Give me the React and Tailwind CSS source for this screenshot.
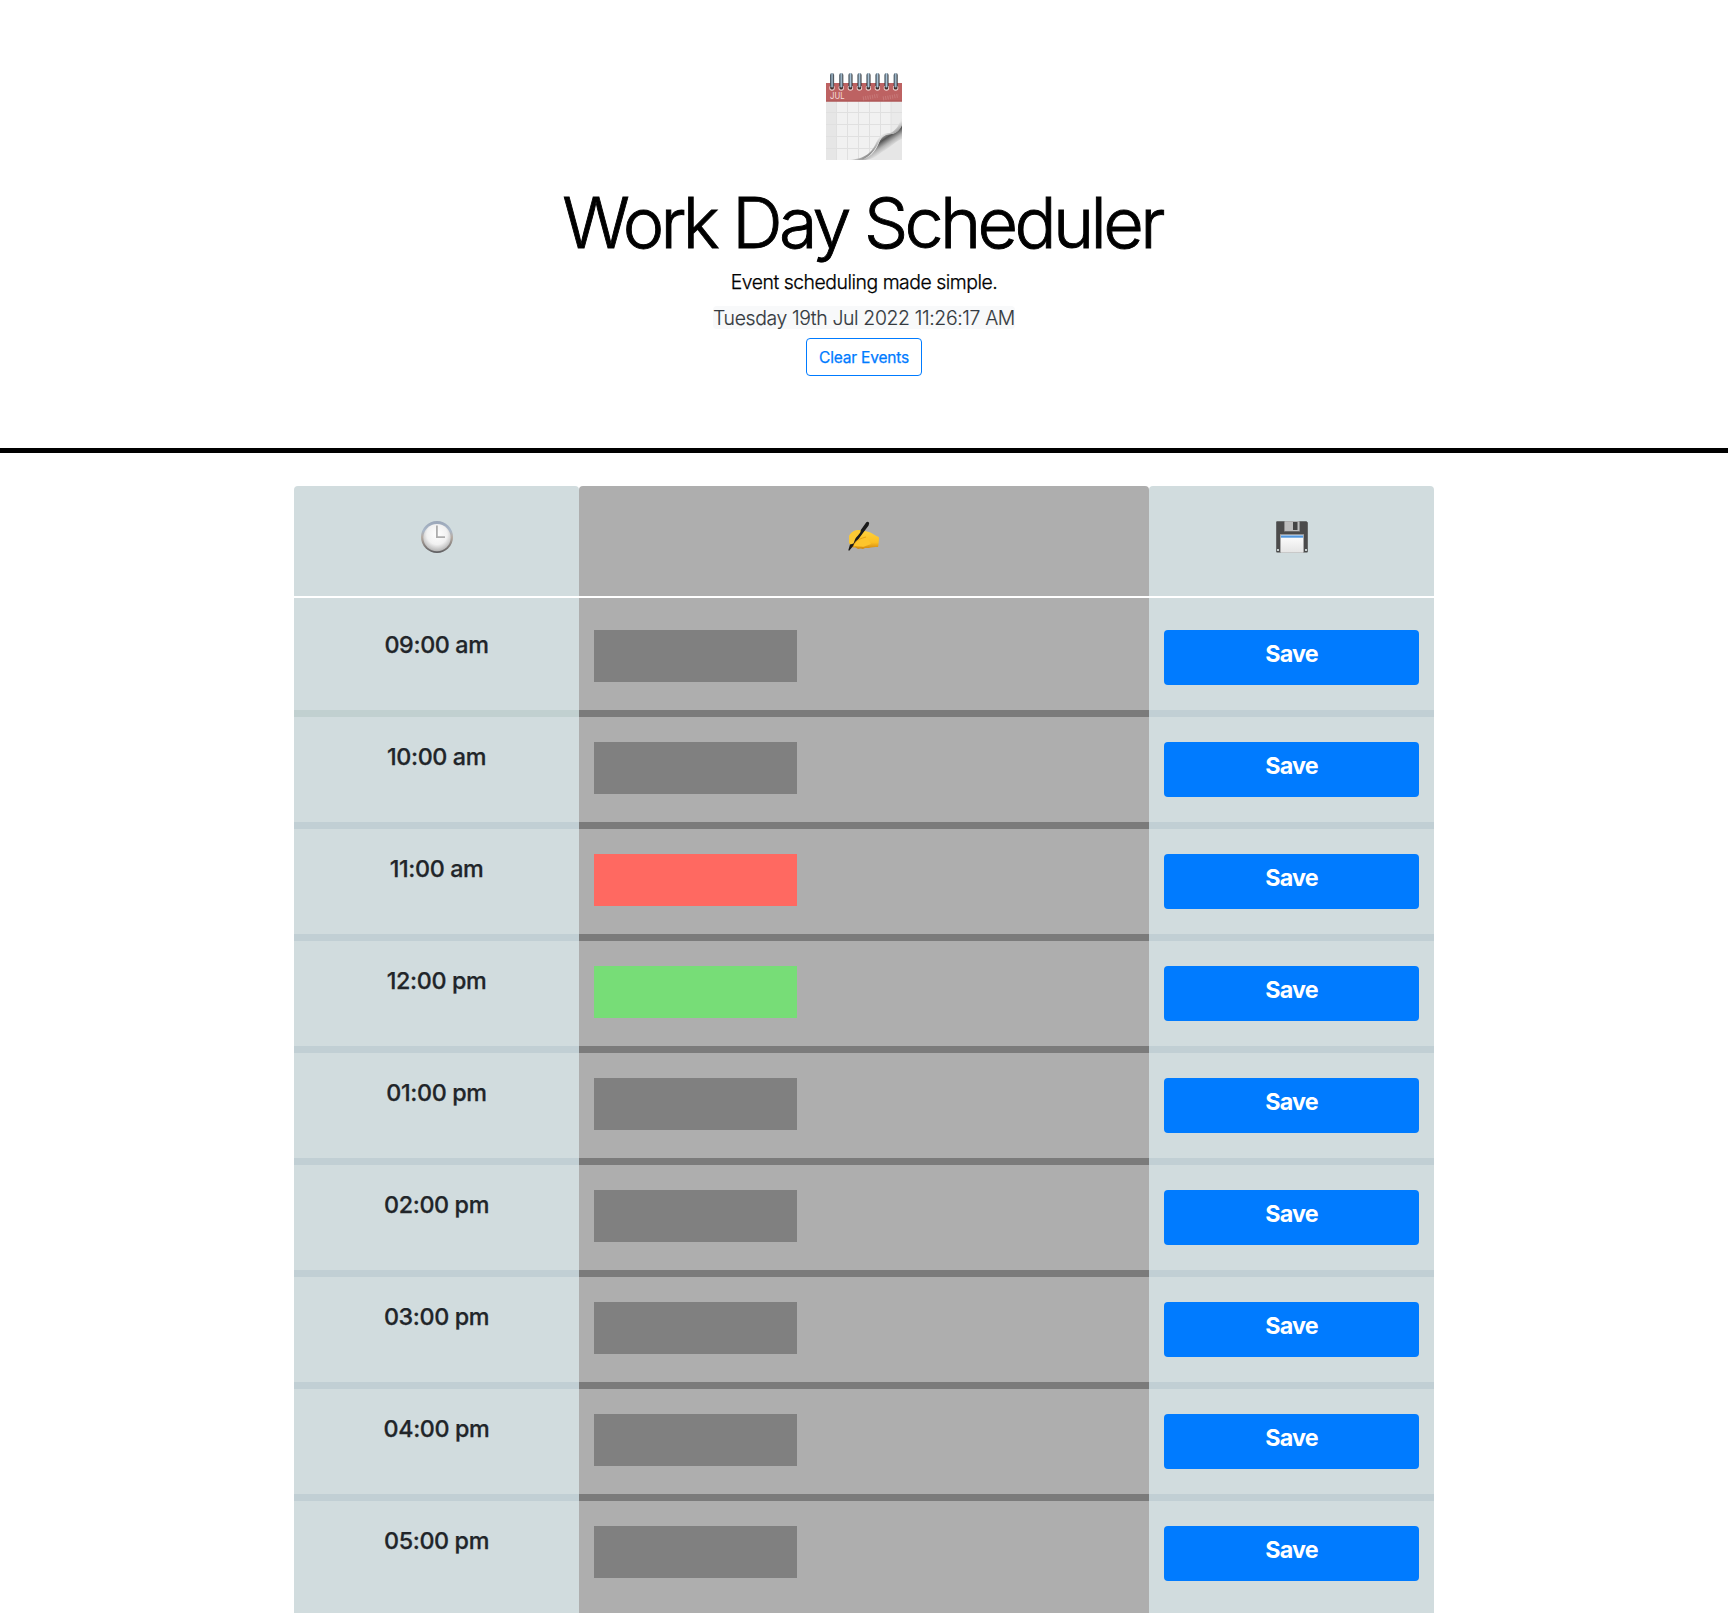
const hours = [
  { label: "09:00 am", color: "bg-[#808080]" },
  { label: "10:00 am", color: "bg-[#808080]" },
  { label: "11:00 am", color: "bg-[#ff6961]" },
  { label: "12:00 pm", color: "bg-[#77dd77]" },
  { label: "01:00 pm", color: "bg-[#808080]" },
  { label: "02:00 pm", color: "bg-[#808080]" },
  { label: "03:00 pm", color: "bg-[#808080]" },
  { label: "04:00 pm", color: "bg-[#808080]" },
  { label: "05:00 pm", color: "bg-[#808080]" },
];

function CalendarIcon() {
  const rings = [6, 15.2, 24.4, 33.4, 42.4, 51.4, 60.4, 69.6];
  return (
    <svg width="80" height="90" viewBox="-2 0 80 90" aria-hidden="true">
      <defs>
        <linearGradient id="ring" x1="0" x2="1" y1="0" y2="0">
          <stop offset="0" stopColor="#27323b" />
          <stop offset=".5" stopColor="#a9c3d6" />
          <stop offset="1" stopColor="#2b2b2e" />
        </linearGradient>
        <linearGradient id="curl" gradientUnits="userSpaceOnUse" x1="50" y1="62" x2="60" y2="77">
          <stop offset="0" stopColor="#e4e4e4" />
          <stop offset=".25" stopColor="#a4a4a4" />
          <stop offset=".45" stopColor="#555555" />
          <stop offset=".75" stopColor="#b4b4b4" />
          <stop offset="1" stopColor="#e2e2e2" />
        </linearGradient>
        <linearGradient id="flap" gradientUnits="userSpaceOnUse" x1="44" y1="58" x2="56" y2="74">
          <stop offset="0" stopColor="#ffffff" />
          <stop offset=".55" stopColor="#e4e4e4" />
          <stop offset="1" stopColor="#7d7d7d" />
        </linearGradient>
      </defs>
      <rect x="0" y="28" width="76" height="59" fill="#f1f1f1" />
      <rect x="0" y="28" width="10.5" height="59" fill="#e6e6e6" />
      <rect x="65" y="28" width="11" height="38" fill="#eaeaea" />
      <path d="M10.5 28V87M21.5 28V87M32.5 28V87M43.5 28V80M54.5 28V66M65 28V60M0 39.5H76M0 51.5H74M0 63.5H54M0 75.5H48" stroke="#e0e0e0" strokeWidth="1" fill="none" />
      <rect x="0" y="10" width="76" height="18.5" fill="#bd6262" />
      <path d="M0 28H76" stroke="#a75353" />
      <text x="4" y="26" fontSize="8.5" textLength="14.5" lengthAdjust="spacingAndGlyphs" fill="#f5dede" className="font-['Inter',sans-serif]">JUL</text>
      <path d="M37 25.5L53 22.5M57 25.5L73 22.5" stroke="#d08a8a" strokeWidth="4" strokeDasharray="1 1.3" opacity=".6" />
      {rings.map((x) => (
        <g key={x}>
          <circle cx={x} cy="15" r="2.7" fill="#f0d5d3" />
          <circle cx={x} cy="14.7" r="1.9" fill="#40302f" />
          <rect x={x - 1.9} y="0" width="4" height="14.5" rx="2" fill="url(#ring)" />
        </g>
      ))}
      <path d="M36 87C48 85 58 76 76 63V87Z" fill="#e6e6e6" />
      <path d="M34 87C44 85 49 79 53 70C55 64 59 61 66 61C71 60 74 56 76 51V66C68 69 64 75 56 79C49 85 44 87 37 87Z" fill="url(#curl)" />
      <path d="M22 87C40 86 46 79 50 70C54 62 57 60 64 60C70 58 74 51 76 42V52C74 57 71 60 66 61C57 61 55 65 52 71C47 80 41 86 34 87Z" fill="url(#flap)" />
    </svg>
  );
}

function ClockIcon() {
  return (
    <svg width="32" height="32" viewBox="0 0 32 32" aria-hidden="true">
      <defs>
        <linearGradient id="rim" x1="0" x2="0" y1="0" y2="1">
          <stop offset="0" stopColor="#9aa6b8" />
          <stop offset=".3" stopColor="#a9b7c8" />
          <stop offset=".5" stopColor="#b7aca3" />
          <stop offset="1" stopColor="#5d5d60" />
        </linearGradient>
        <radialGradient id="face" cx=".5" cy=".38" r=".62">
          <stop offset="0" stopColor="#ffffff" />
          <stop offset=".6" stopColor="#f1f1f1" />
          <stop offset="1" stopColor="#b4b4b4" />
        </radialGradient>
      </defs>
      <circle cx="16" cy="16" r="16" fill="url(#rim)" />
      <circle cx="16" cy="16.6" r="13.7" fill="url(#face)" />
      <path d="M15.9 4.5V16.2H24" stroke="#adadad" strokeWidth="1.8" fill="none" />
    </svg>
  );
}

function WritingHandIcon() {
  return (
    <svg width="32" height="32" viewBox="0 0 32 32" aria-hidden="true">
      <defs>
        <linearGradient id="skin" x1="0" x2="0" y1="0" y2="1">
          <stop offset="0" stopColor="#ffd23f" />
          <stop offset=".65" stopColor="#fcbf22" />
          <stop offset="1" stopColor="#d0860f" />
        </linearGradient>
      </defs>
      <path d="M1.2 15C3 11 7 9 12 9L19 10.5C24 11.5 26.5 14.5 30.3 15.8Q31.2 16.2 31 17.5L30.3 25.2Q30 26.3 28 26C24 25.8 21 27.5 17 27L15 28L12.5 27.5L10 28L7.5 26.5L3.5 26.2L1.2 22Z" fill="url(#skin)" />
      <path d="M18.3 1.3Q20 0 21.2 2L20.6 4.4L12 16L5.5 24.5L1.2 29.8L.3 29.2L2 23.5L10 13Z" fill="#191919" />
      <path d="M1.3 15C3 11 7 9 12 9C14 10 11 13.5 9 15.5C7 17.5 6.5 20 5.5 22.5L2.4 23.6L1.2 21Z" fill="#fcc934" />
      <path d="M5.5 24.2C8 18.5 13 16.6 18.5 15.5L23 23L15 26L6.5 25.5Z" fill="#fdc52c" />
      <path d="M6 23.5C8.5 18.5 13 17.5 18 16M7 25.6C11 26.6 13 25.6 16 26.5" stroke="#d8920f" strokeWidth=".7" fill="none" />
    </svg>
  );
}

function FloppyIcon() {
  return (
    <svg width="32" height="32" viewBox="0 0 32 32" aria-hidden="true">
      <defs>
        <linearGradient id="label" x1="0" x2="0" y1="0" y2="1">
          <stop offset="0" stopColor="#ffffff" />
          <stop offset="1" stopColor="#e4e4e4" />
        </linearGradient>
      </defs>
      <path d="M1 .3H30.5L31.8 1.6V30.8Q31.8 31.5 31 31.5H1Q.2 31.5.2 30.8V1Q.2.3 1 .3Z" fill="#4b4b4b" />
      <path d="M8 0H24V10.5H8Z" fill="#8d8d8d" />
      <path d="M9 .3H23V10H9Z" fill="#bdbdbd" />
      <rect x="17" y="1" width="4.5" height="8" fill="#444" />
      <rect x="4" y="13.2" width="24" height="18.4" fill="#a9a9a9" />
      <rect x="5" y="14" width="22" height="17.6" fill="url(#label)" />
      <rect x="5" y="14.4" width="22" height="2.3" fill="#5196dc" />
      <rect x="1" y="28" width="2" height="2" fill="#c8d0d0" />
      <rect x="29" y="28" width="2" height="2" fill="#c8d0d0" />
    </svg>
  );
}

function HeaderCell({ className, children }) {
  return (
    <div className={`flex h-[110px] justify-center rounded-t pt-[35px] ${className}`}>{children}</div>
  );
}

function HourRow({ label, color, first, last }) {
  const pad = first ? "h-[119px] pt-8" : "h-28 pt-[25px]";
  const edge = last ? "" : "border-b-[7px]";
  const light = first ? "border-[#c1d0d0]" : "border-[#c1cfd4]";
  return (
    <div className="grid grid-cols-[285px_570px_285px] text-[23.3px]">
      <div className={`bg-[#d1dcde] text-center font-medium text-[#212529] ${pad} ${edge} ${light}`}>
        <div className="leading-[30px] tracking-[-0.36px] [-webkit-text-stroke:0.25px_#212529]">{label}</div>
      </div>
      <div className={`border-[#7b7b7b] bg-[#aeaeae] pl-[15px] ${pad} ${edge}`}>
        <div className={`h-[52px] w-[203px] ${color}`} />
      </div>
      <div className={`border-[#c1cfd4] bg-[#d1dcde] px-[15px] ${pad} ${edge}`}>
        <button className="block h-[55px] w-full rounded bg-[#007bff] pb-[7px] text-center font-bold leading-[48px] tracking-[-0.85px] text-white">
          Save
        </button>
      </div>
    </div>
  );
}

export default function App() {
  return (
    <div className="h-[1613px] overflow-hidden bg-white font-['Inter',sans-serif]">
      <header className="flex h-[453px] flex-col items-center border-b-[5px] border-black pt-[73px] text-black">
        <CalendarIcon />
        <h1 className="mr-1 mt-[15px] h-[89px] whitespace-nowrap text-[70px] font-light leading-[89px] tracking-[-3.65px] [-webkit-text-stroke:0.9px_black]">
          Work Day Scheduler
        </h1>
        <p className="h-[30px] whitespace-nowrap text-[19.4px] font-light leading-[30px] tracking-[-0.48px] [-webkit-text-stroke:0.25px_black]">
          Event scheduling made simple.
        </p>
        <p className="mt-[9px] h-[23px] whitespace-nowrap rounded bg-[#f8f9fa] text-[19.4px] font-light leading-[25px] tracking-[-0.36px] text-[#343a40] [-webkit-text-stroke:0.15px_#343a40]">
          Tuesday 19th Jul 2022 11:26:17 AM
        </p>
        <button className="mt-[9px] h-[38px] w-[116px] whitespace-nowrap rounded border border-[#007bff] pt-px text-[15.5px] font-normal leading-[36px] tracking-[-0.2px] text-[#007bff] [-webkit-text-stroke:0.25px_#007bff]">
          Clear Events
        </button>
      </header>
      <main className="mx-auto mt-[33px] w-[1140px]">
        <div className="mb-0.5 grid grid-cols-[285px_570px_285px]">
          <HeaderCell className="bg-[#d1dcde]"><ClockIcon /></HeaderCell>
          <HeaderCell className="bg-[#aeaeae]"><WritingHandIcon /></HeaderCell>
          <HeaderCell className="bg-[#d1dcde]"><FloppyIcon /></HeaderCell>
        </div>
        {hours.map((hour, i) => (
          <HourRow key={hour.label} {...hour} first={i === 0} last={i === hours.length - 1} />
        ))}
      </main>
    </div>
  );
}
